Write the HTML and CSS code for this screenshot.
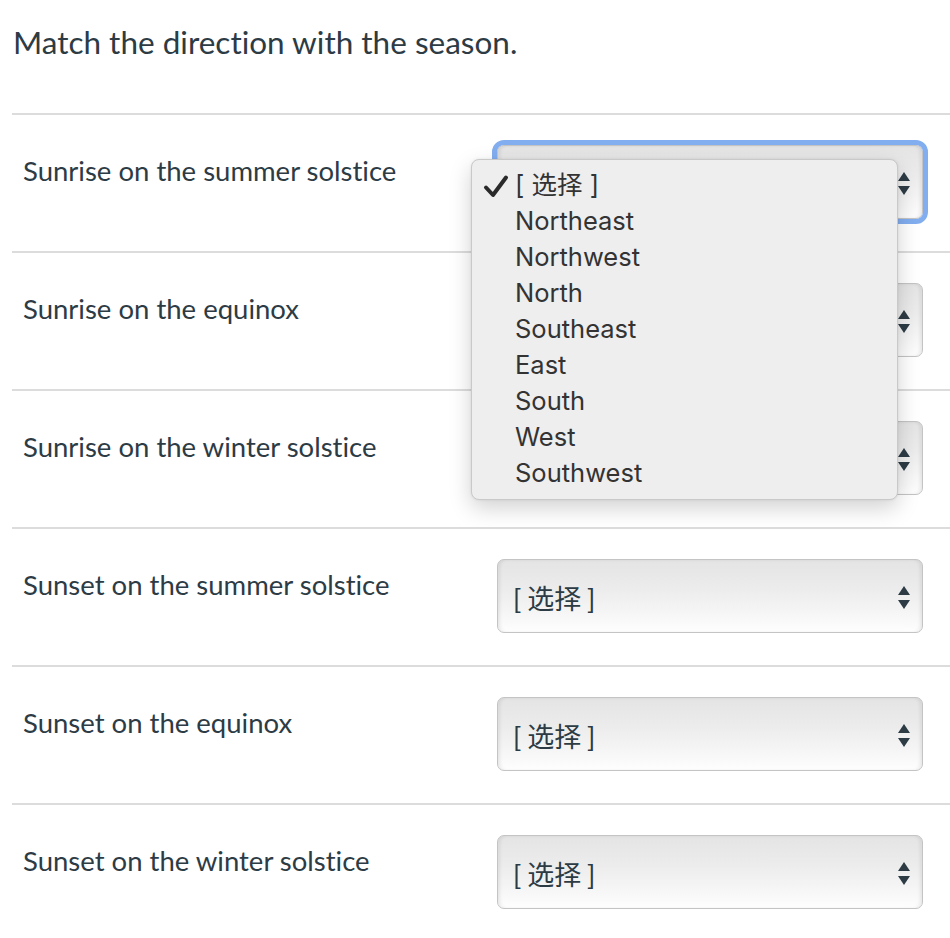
FILE: index.html
```html
<!DOCTYPE html>
<html>
<head>
<meta charset="utf-8">
<link rel="stylesheet" href="styles.css">
</head>
<body>
<div class="page">
  <h1 class="title">Match the direction with the season.</h1>
  <div class="rows">
    <div class="row">
      <div class="label">Sunrise on the summer solstice</div>
      <div class="select focused">
        <span class="select-text">[ 选择 ]</span>
        <span class="arrows"><span class="up"></span><span class="down"></span></span>
        <div class="menu">
          <div class="item checked"><svg class="check" width="26" height="26" viewBox="0 0 26 26"><path d="M3 13.5 L10 21 L23 3.5" fill="none" stroke="#2a2a2a" stroke-width="4" stroke-linecap="round" stroke-linejoin="round"/></svg>[ 选择 ]</div>
          <div class="item">Northeast</div>
          <div class="item">Northwest</div>
          <div class="item">North</div>
          <div class="item">Southeast</div>
          <div class="item">East</div>
          <div class="item">South</div>
          <div class="item">West</div>
          <div class="item">Southwest</div>
        </div>
      </div>
    </div>
    <div class="row">
      <div class="label">Sunrise on the equinox</div>
      <div class="select">
        <span class="select-text">[ 选择 ]</span>
        <span class="arrows"><span class="up"></span><span class="down"></span></span>
      </div>
    </div>
    <div class="row">
      <div class="label">Sunrise on the winter solstice</div>
      <div class="select">
        <span class="select-text">[ 选择 ]</span>
        <span class="arrows"><span class="up"></span><span class="down"></span></span>
      </div>
    </div>
    <div class="row">
      <div class="label">Sunset on the summer solstice</div>
      <div class="select">
        <span class="select-text">[ 选择 ]</span>
        <span class="arrows"><span class="up"></span><span class="down"></span></span>
      </div>
    </div>
    <div class="row">
      <div class="label">Sunset on the equinox</div>
      <div class="select">
        <span class="select-text">[ 选择 ]</span>
        <span class="arrows"><span class="up"></span><span class="down"></span></span>
      </div>
    </div>
    <div class="row">
      <div class="label">Sunset on the winter solstice</div>
      <div class="select">
        <span class="select-text">[ 选择 ]</span>
        <span class="arrows"><span class="up"></span><span class="down"></span></span>
      </div>
    </div>
  </div>
</div>
</body>
</html>
```
FILE: styles.css
```css
html, body {
  margin: 0;
  padding: 0;
  background: #ffffff;
}
body {
  font-family: Lato, "Noto Sans CJK SC", sans-serif;
  color: #2d3b45;
  overflow: hidden;
  font-variant-ligatures: none;
}
.page {
  padding-left: 12px;
}
.title {
  margin: 0;
  padding: 22px 0 0 1px;
  height: 113px;
  box-sizing: border-box;
  font-weight: 400;
  font-size: 31.5px;
  line-height: 40px;
  color: #2d3b45;
}
.rows {
  display: flex;
  flex-direction: column;
}
.row {
  border-top: 2px solid #dcdcdc;
  height: 138px;
  box-sizing: border-box;
  display: grid;
  grid-template-columns: 485px 426px;
  align-items: start;
}
.label {
  padding: 38px 0 0 11px;
  font-size: 27.5px;
  line-height: 36px;
}
.select {
  position: relative;
  margin-top: 30px;
  height: 74px;
  box-sizing: border-box;
  border: 1px solid #c4c4c4;
  border-radius: 7px;
  background: linear-gradient(to bottom, #e4e4e4 0%, #ececec 40%, #f6f6f6 75%, #fefefe 100%);
  box-shadow: inset 3px 0 4px -2px rgba(0,0,0,0.12), inset -3px 0 4px -2px rgba(0,0,0,0.12), inset 0 -2px 2px rgba(255,255,255,0.9);
  display: flex;
  align-items: center;
  justify-content: space-between;
  padding: 0 12px 0 15px;
}
.select.focused {
  outline: 5px solid #82aef0;
  outline-offset: 0;
}
.select-text {
  font-size: 27px;
  color: #2d3b45;
  word-spacing: -1px;
  padding-top: 2px;
}
.arrows {
  display: flex;
  flex-direction: column;
  gap: 5px;
  width: 13px;
  align-items: center;
  padding-top: 2px;
}
.up {
  width: 0;
  height: 0;
  border-left: 6.5px solid transparent;
  border-right: 6.5px solid transparent;
  border-bottom: 9px solid #2d3b45;
}
.down {
  width: 0;
  height: 0;
  border-left: 6.5px solid transparent;
  border-right: 6.5px solid transparent;
  border-top: 9px solid #2d3b45;
}
.menu {
  position: absolute;
  left: -27px;
  top: 13px;
  width: 427px;
  height: 341px;
  box-sizing: border-box;
  padding-top: 7px;
  background: #eeeeef;
  border: 1px solid #c9c9c9;
  border-radius: 8px;
  box-shadow: 0 8px 22px rgba(0,0,0,0.18), 0 0 3px rgba(0,0,0,0.08);
  z-index: 5;
}
.item {
  height: 36px;
  line-height: 36px;
  padding-left: 43px;
  font-family: Inter, "Noto Sans CJK SC", sans-serif;
  font-size: 25.5px;
  color: #333333;
  position: relative;
}
.check {
  position: absolute;
  left: 11px;
  top: 7px;
}
```
